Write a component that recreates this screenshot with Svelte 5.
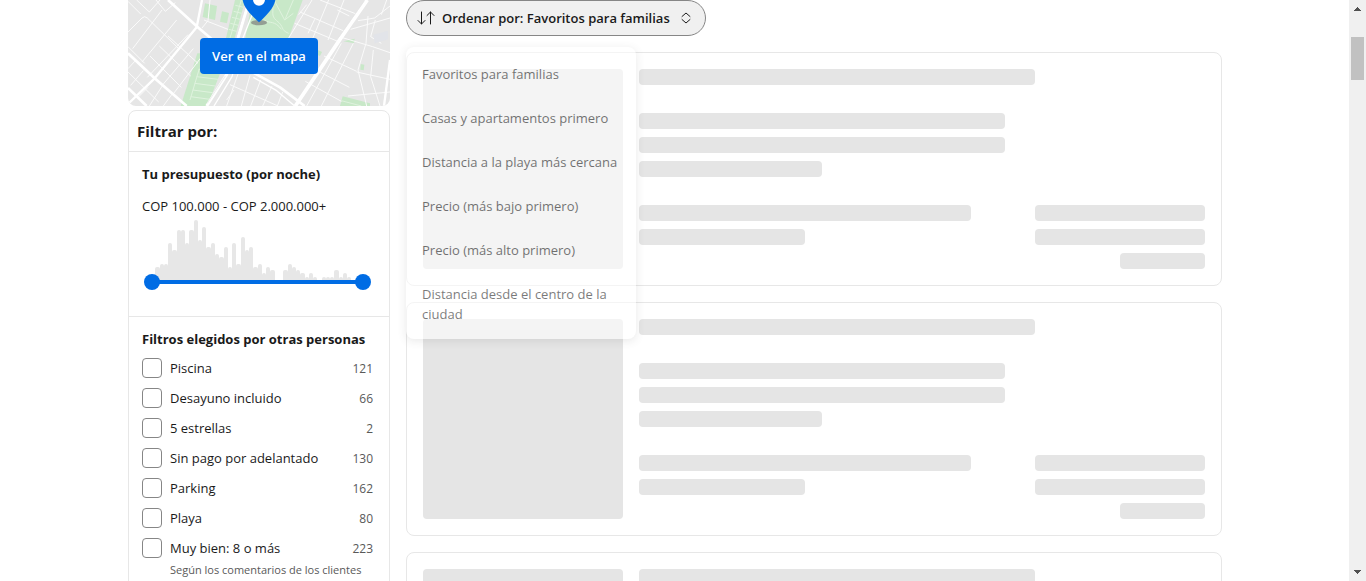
<script>
  const sortOptions = [
    'Favoritos para familias',
    'Casas y apartamentos primero',
    'Distancia a la playa más cercana',
    'Precio (más bajo primero)',
    'Precio (más alto primero)',
    'Distancia desde el centro de la ciudad'
  ];

  const filters = [
    { id: 'pool', label: 'Piscina', count: 121 },
    { id: 'breakfast', label: 'Desayuno incluido', count: 66 },
    { id: 'five-stars', label: '5 estrellas', count: 2 },
    { id: 'no-prepay', label: 'Sin pago por adelantado', count: 130 },
    { id: 'parking', label: 'Parking', count: 162 },
    { id: 'beach', label: 'Playa', count: 80 },
    { id: 'very-good', label: 'Muy bien: 8 o más', count: 223, note: 'Según los comentarios de los clientes' }
  ];

  // Number of stays per price step, as bar heights
  const histogram = [
    0, 13, 16, 16, 37, 30, 50, 50, 37, 50, 60, 40, 53, 33, 37, 26, 23, 33, 13, 37, 16, 43, 30, 33, 13,
    16, 7, 13, 10, 0, 0, 10, 16, 13, 10, 7, 3, 7, 3, 0, 3, 3, 3, 10, 3, 7, 3, 0, 0, 0
  ];

  const placeholders = [1, 2, 3];

  let priceMin = $state(0);
  let priceMax = $state(100);
</script>

<div class="window">
  <div class="page">
    <aside class="sidebar">
      <div class="map">
        <svg class="map-art" viewBox="0 0 786 318" preserveAspectRatio="xMidYMax slice" aria-hidden="true">
          <rect width="786" height="318" fill="#e6e6e6" />
          <!-- Parks -->
          <g fill="#c8e8c8">
            <path d="M321 0H352L320 114H294Z" />
            <path d="M372 0H524L482 114H352Z" />
            <path d="M208 160H300L238 318H158Z" />
            <path d="M231 10L267 18L261 60L224 51Z" />
            <path d="M282 34L303 39L297 70L276 65Z" />
            <path d="M570 150L582 156L576 168L570 166Z" />
            <path d="M646 124L680 116L678 130Z" />
            <path d="M698 192L709 194L707 211L697 209Z" />
            <path d="M644 289L726 310V318H636Z" />
          </g>
          <!-- Park paths -->
          <g fill="none" stroke="#dff2de" stroke-width="3">
            <path d="M340 0L306 114M322 16L346 22M317 34L341 40M312 52L336 58M307 70L331 76M302 88L326 94" />
            <path d="M426 0C446 24 422 44 446 62S456 90 482 100M438 0L470 60L496 40M408 60C426 72 440 60 460 88M496 0L472 56" />
            <path d="M214 206L186 300M206 230L270 238M200 250L262 258M194 270L254 278M188 290L246 298M212 208L280 216" />
            <path d="M640 302L700 318" />
          </g>
          <!-- Side streets -->
          <g fill="none" stroke="#fafafa" stroke-width="3">
            <path d="M0 96L42 54Q50 46 58 54L150 144M38 42L0 4M102 30L14 146M146 60L42 186M84 0L112 34L142 8M26 0L64 36L96 0" />
            <path d="M180 104L58 232M94 138L188 228M120 108L210 190M66 168L160 262M196 146L106 252M224 166L134 284M50 190L0 140M24 180L0 206" />
            <path d="M0 216L92 306M46 212L8 256M104 256L64 318M134 280L106 318M60 262L30 292" />
            <path d="M228 60L300 88M246 0L240 62L222 84" />
            <path d="M366 226L340 318M398 240L368 318M432 258L404 318M464 276L448 318M306 254L450 318M330 222L296 318M318 270L296 300" />
            <path d="M552 0L482 114M602 0L548 130M648 0L600 120M516 36L650 94M500 70L634 126M576 0L690 44M536 14L512 44M628 30L664 48M560 58L540 100" />
            <path d="M560 208L664 262M532 244L640 304M588 168L686 214M640 130L536 318M676 130L580 318M720 48L714 130L690 210L716 318M640 112L734 140L786 158M668 88L786 54M690 62L740 54L786 18M742 60L728 110L760 130M686 216L786 238M736 150L728 230L756 318M760 44L776 0M660 288L786 276" />
          </g>
          <path d="M736 104L780 92V118L740 130Z" fill="#e2e4e9" />
          <!-- Avenues -->
          <g fill="none" stroke="#fff" stroke-linejoin="round">
            <path d="M120 0L212 84L250 116L376 218L456 262L530 318" stroke-width="8" />
            <path d="M376 232L446 272L500 318" stroke-width="4" />
            <path d="M222 0L206 82L80 235L0 312" stroke-width="7" />
            <path d="M0 160L80 235L176 318" stroke-width="8" />
            <path d="M0 264L56 318" stroke-width="8" />
            <path d="M718 0L640 112L502 318" stroke-width="11" />
            <path d="M364 0L328 120L296 224L236 318" stroke-width="9" />
            <path d="M378 30L344 116L312 230L258 318" stroke-width="4" />
            <path d="M786 180L768 318" stroke-width="7" />
          </g>
          <g fill="none" stroke="#e4e4e4" stroke-width="2">
            <path d="M708 4L632 112M352 20L322 118M292 228L238 310" />
          </g>
          <!-- Pin -->
          <ellipse cx="393" cy="68" rx="24" ry="8" fill="#777" opacity=".65" />
          <path d="M344 0H442C438 24 414 48 393 67C372 48 348 24 344 0Z" fill="#006ce4" />
          <circle cx="393" cy="-1" r="18" fill="#fff" />
        </svg>
        <button class="map-button" type="button">Ver en el mapa</button>
      </div>

      <div class="filters">
        <h2>Filtrar por:</h2>

        <section class="budget">
          <h3>Tu presupuesto (por noche)</h3>
          <p>COP 100.000 - COP 2.000.000+</p>
          <div class="histogram" aria-hidden="true">
            {#each histogram as height}
              <span style="height: {height}px"></span>
            {/each}
          </div>
          <div class="slider">
            <input type="range" min="0" max="100" aria-label="Precio mínimo" bind:value={priceMin} />
            <input type="range" min="0" max="100" aria-label="Precio máximo" bind:value={priceMax} />
          </div>
        </section>

        <section class="popular">
          <h3>Filtros elegidos por otras personas</h3>
          <ul>
            {#each filters as filter}
              <li>
                <input type="checkbox" id={filter.id} />
                <label for={filter.id}>
                  {filter.label}
                  {#if filter.note}<small>{filter.note}</small>{/if}
                </label>
                <span class="count">{filter.count}</span>
              </li>
            {/each}
          </ul>
        </section>
      </div>
    </aside>

    <main class="results">
      <div class="sorter">
        <button class="sort-button" type="button" aria-expanded="true">
          <svg class="sort-icon" viewBox="0 0 18 16" aria-hidden="true">
            <path d="M4.500 2V14M1 10.500L4.500 14L8 10.500M13.500 14V2M10 5.500L13.500 2L17 5.500" />
          </svg>
          <span>Ordenar por: Favoritos para familias</span>
          <svg class="chevrons" viewBox="0 0 10 12" aria-hidden="true">
            <path d="M1 4.500L5 1L9 4.500M1 7.500L5 11L9 7.500" />
          </svg>
        </button>
        <ul class="menu">
          {#each sortOptions as option}
            <li><button type="button">{option}</button></li>
          {/each}
        </ul>
      </div>

      {#each placeholders as card (card)}
        <article class="card">
          <div class="photo"></div>
          <div class="lines">
            <i class="bar title"></i>
            <div class="group details">
              <i class="bar"></i>
              <i class="bar"></i>
              <i class="bar half"></i>
            </div>
            <div class="bottom">
              <div class="group room">
                <i class="bar"></i>
                <i class="bar half"></i>
              </div>
              <div class="group price">
                <i class="bar"></i>
                <i class="bar"></i>
                <i class="bar half"></i>
              </div>
            </div>
          </div>
        </article>
      {/each}
    </main>
  </div>

  <div class="scrollbar" aria-hidden="true">
    <svg viewBox="0 0 7 4"><path d="M3 0H4V1H5V2H6V3H7V4H0V3H1V2H2V1H3Z" /></svg>
    <div class="thumb"></div>
    <svg class="down" viewBox="0 0 7 4"><path d="M0 0H7V1H6V2H5V3H4V4H3V3H2V2H1V1H0Z" /></svg>
  </div>
</div>

<style>
  :global(body) {
    margin: 0;
    background: #fff;
  }

  .window {
    display: flex;
    height: 100vh;
    overflow: hidden;
    color: #1a1a1a;
    font-family: 'Open Sans', 'Noto Sans', sans-serif;
    font-size: 13px;
    line-height: 20px;
  }

  .window * {
    box-sizing: border-box;
  }

  button {
    font: inherit;
    color: inherit;
    cursor: pointer;
  }

  h2,
  h3,
  p,
  ul {
    margin: 0;
    padding: 0;
  }

  ul {
    list-style: none;
  }

  .page {
    flex: 1;
    display: flex;
    align-items: flex-start;
    gap: 16px;
    max-width: 1095px;
    margin: 0 auto;
    padding-left: 1px;
  }

  .sidebar {
    flex: none;
    width: 262px;
  }

  .map {
    display: grid;
    place-items: center;
    border-radius: 0 0 8px 8px;
    overflow: hidden;
  }

  .map > * {
    grid-area: 1 / 1;
  }

  .map-art {
    display: block;
    width: 100%;
    height: 106px;
  }

  .map-button {
    height: 36px;
    margin-top: 6px;
    padding: 0 12px;
    border: 0;
    border-radius: 4px;
    background: #006ce4;
    color: #fff;
    font-weight: 600;
  }

  .filters {
    margin-top: 4px;
    border: 1px solid #e7e7e7;
    border-radius: 8px;
  }

  h2 {
    padding: 8px;
    font-size: 15px;
    line-height: 24px;
    font-weight: 700;
  }

  h3 {
    font-size: 13px;
    line-height: 20px;
    font-weight: 700;
  }

  section {
    padding: 12px 16px 12px 13px;
    border-top: 1px solid #e7e7e7;
  }

  .budget p {
    margin-top: 12px;
  }

  .histogram {
    display: flex;
    align-items: flex-end;
    height: 60px;
    margin: 4px 9px 0;
  }

  .histogram span {
    flex: 1;
    border-radius: 2px 2px 0 0;
    background: #e7e7e7;
  }

  .slider {
    display: grid;
    align-items: center;
    height: 16px;
    margin: -6px 2px 14px;
    background: linear-gradient(#006ce4, #006ce4) center / calc(100% - 16px) 4px no-repeat;
  }

  .slider input {
    grid-area: 1 / 1;
    width: 100%;
    height: 16px;
    margin: 0;
    background: none;
    appearance: none;
    pointer-events: none;
  }

  .slider input::-webkit-slider-thumb {
    width: 16px;
    height: 16px;
    border: 0;
    border-radius: 50%;
    background: #006ce4;
    appearance: none;
    pointer-events: auto;
  }

  .popular ul {
    display: grid;
    grid-template-columns: minmax(0, 1fr);
    gap: 10px;
    margin-top: 9px;
  }

  .popular li {
    display: flex;
    align-items: flex-start;
  }

  .popular li input {
    flex: none;
    width: 20px;
    height: 20px;
    margin: 0 8px 0 0;
    border: 1px solid #868686;
    border-radius: 4px;
    background: #fff;
    appearance: none;
  }

  .popular li input:checked {
    background: #006ce4;
  }

  .popular label {
    flex: 1;
    min-width: 0;
  }

  small {
    display: block;
    margin-top: 2px;
    color: #595959;
    font-size: 11px;
    white-space: nowrap;
  }

  .count {
    padding-top: 2px;
    color: #595959;
    font-size: 12px;
    line-height: 18px;
  }

  .results {
    flex: 1;
    min-width: 0;
    display: grid;
    gap: 16px;
  }

  .sorter {
    position: relative;
  }

  .sort-button {
    display: flex;
    align-items: center;
    height: 36px;
    padding: 0 14px 0 10px;
    border: 1px solid #868686;
    border-radius: 18px;
    background: #f0f0f0;
    font-weight: 600;
  }

  .sort-button svg {
    fill: none;
    stroke: #1a1a1a;
    stroke-width: 1;
    stroke-linecap: round;
    stroke-linejoin: round;
  }

  .sort-icon {
    width: 18px;
    height: 16px;
    margin-right: 7px;
  }

  .chevrons {
    width: 10px;
    height: 12px;
    margin-left: 11px;
  }

  .menu {
    position: absolute;
    top: 47px;
    left: 0;
    width: 230px;
    padding: 5px 0 3px;
    border-radius: 8px;
    background: #fff;
    box-shadow: 0 2px 8px rgba(26, 26, 26, 0.16);
    opacity: 0.58;
  }

  .menu button {
    display: block;
    width: 100%;
    padding: 12px 16px;
    border: 0;
    background: none;
    text-align: left;
  }

  .card {
    display: flex;
    gap: 16px;
    padding: 16px;
    border: 1px solid #e7e7e7;
    border-radius: 8px;
  }

  .photo {
    flex: none;
    width: 200px;
    height: 200px;
    border-radius: 4px;
    background: #e5e5e5;
  }

  .lines {
    flex: 1;
  }

  .bar {
    display: block;
    height: 16px;
    border-radius: 4px;
    background: #e5e5e5;
  }

  .title {
    width: 70%;
  }

  .group {
    display: grid;
    gap: 8px;
    align-content: start;
  }

  .half {
    width: 50%;
  }

  .details {
    width: 70%;
    margin-top: 28px;
    padding-right: 30px;
  }

  .bottom {
    display: grid;
    grid-template-columns: 7fr 3fr;
    margin-top: 28px;
  }

  .room {
    padding-right: 64px;
  }

  .price .half {
    justify-self: end;
  }

  .scrollbar {
    flex: none;
    display: flex;
    flex-direction: column;
    align-items: center;
    width: 17px;
    padding: 7px 0;
    background: #f0f0f0;
  }

  .scrollbar svg {
    width: 7px;
    height: 4px;
    fill: #505050;
  }

  .thumb {
    width: 13px;
    height: 43px;
    margin-top: 26px;
    background: #c1c1c1;
  }

  .scrollbar .down {
    margin-top: auto;
  }
</style>
